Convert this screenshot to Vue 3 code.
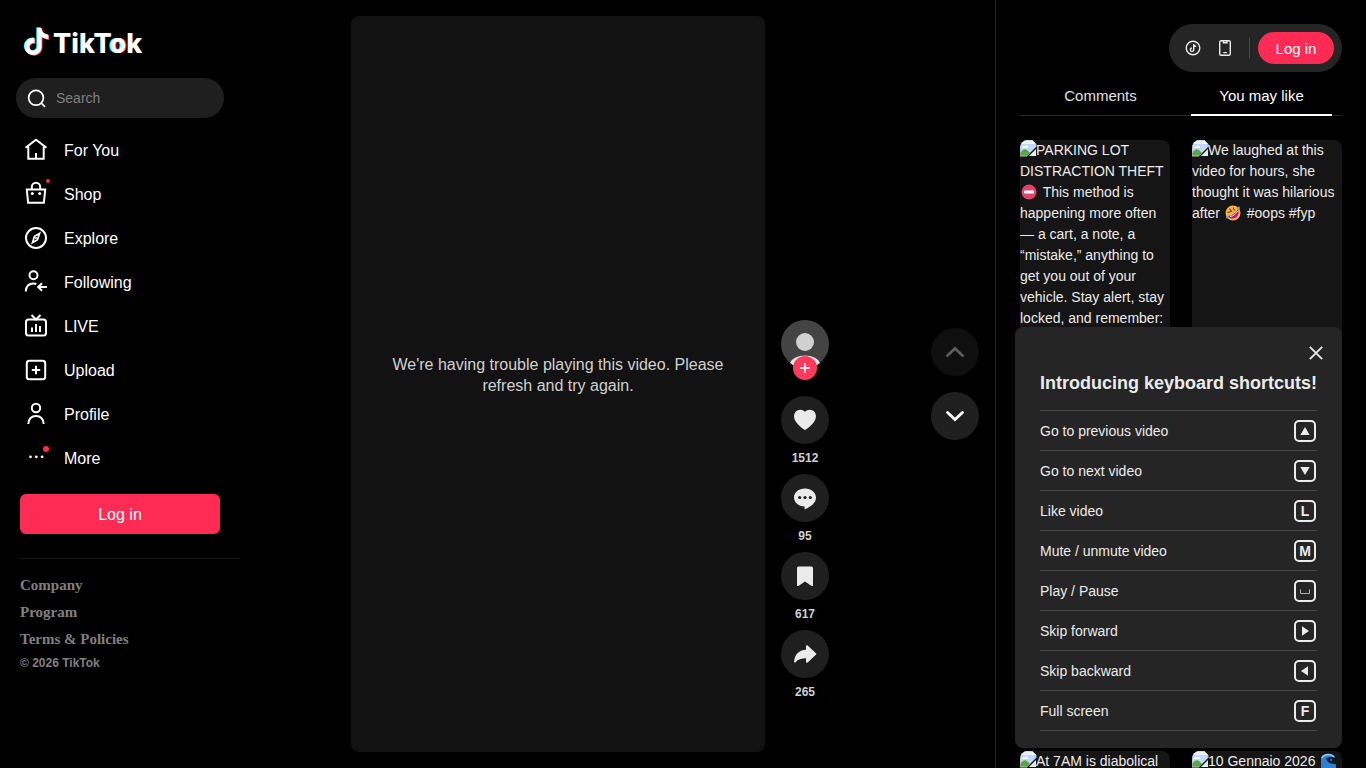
<template>
  <div class="app">
    <!-- Left navigation -->
    <aside class="sidebar">
      <a href="#" class="logo" aria-label="TikTok">
        <svg class="logo-note" viewBox="1 -0.8 22 25.6">
          <path :d="notePath" fill="#25f4ee" transform="translate(-0.7 -0.6)" />
          <path :d="notePath" fill="#fe2c55" transform="translate(0.7 0.6)" />
          <path :d="notePath" fill="#fff" />
        </svg>
        <span class="logo-text">TikT<span class="logo-o">o</span>k</span>
      </a>

      <label class="search">
        <svg viewBox="0 0 24 24">
          <circle cx="12" cy="11.8" r="7.4" />
          <path d="M17.200 17l3.800 3.800" />
        </svg>
        <input type="search" placeholder="Search" aria-label="Search" />
      </label>

      <nav class="menu">
        <a v-for="item in menu" :key="item.label" href="#" class="menu-item">
          <svg class="menu-icon" viewBox="0 0 24 24" v-html="item.icon"></svg>
          <span>{{ item.label }}</span>
        </a>
      </nav>

      <button class="login-wide">Log in</button>

      <footer class="links">
        <a v-for="link in links" :key="link" href="#">{{ link }}</a>
        <small>© 2026 TikTok</small>
      </footer>
    </aside>

    <!-- Video feed -->
    <main class="feed">
      <article class="post">
        <div class="player">
          <p>We're having trouble playing this video. Please refresh and try again.</p>
        </div>
        <div class="actions">
          <div class="author">
            <a href="#" class="avatar" aria-label="Author">
              <svg viewBox="0 0 48 48">
                <circle cx="24" cy="24" r="24" fill="#444" />
                <circle cx="24" cy="22" r="9" fill="#d0d0d0" />
                <path d="M9 43a15.500 10 0 0 1 30 0A24 24 0 0 1 9 43z" fill="#e4e4e4" />
              </svg>
            </a>
            <button class="follow" aria-label="Follow">
              <svg viewBox="0 0 24 24"><path d="M12 7v10M7 12h10" /></svg>
            </button>
          </div>
          <div v-for="action in actions" :key="action.name" class="action">
            <button class="round" :aria-label="action.name">
              <svg viewBox="0 0 24 24" v-html="action.icon"></svg>
            </button>
            <strong>{{ action.count }}</strong>
          </div>
        </div>
      </article>

      <div class="pager">
        <button class="round" aria-label="Previous video" disabled>
          <svg viewBox="0 0 24 24"><path d="M4.500 15.500l7.500-7 7.500 7" /></svg>
        </button>
        <button class="round" aria-label="Next video">
          <svg viewBox="0 0 24 24"><path d="M4.500 8.500l7.500 7 7.500-7" /></svg>
        </button>
      </div>
    </main>

    <!-- Right panel -->
    <aside class="panel">
      <div class="toolbar">
        <button class="tool" aria-label="Get coins">
          <svg viewBox="0 0 16 16">
            <circle cx="8" cy="8" r="6.8" />
            <path d="M8.700 4v5.700a1.700 1.700 0 1 1-1.700-1.700M8.700 4c.2 1.500 1.100 2.200 2.500 2.400" />
          </svg>
        </button>
        <button class="tool" aria-label="Get app">
          <svg viewBox="0 0 16 16">
            <rect x="2.700" y="0.700" width="10.6" height="14.6" rx="1.5" />
            <path d="M6.500 1v1.800h3.500v-1.800M6.300 12.600h3.500" />
          </svg>
        </button>
        <span class="divider"></span>
        <button class="login-pill">Log in</button>
      </div>

      <div class="tabs" role="tablist">
        <button
          v-for="tab in tabs"
          :key="tab"
          role="tab"
          class="tab"
          :class="{ active: tab === activeTab }"
          :aria-selected="tab === activeTab"
          @click="activeTab = tab"
        >{{ tab }}</button>
      </div>

      <div class="related">
        <a v-for="(video, i) in videos" :key="i" href="#" class="card">
          <svg class="missing" viewBox="0 0 16 16">
            <path d="M0 0h12l4 4v3l-9 9H0z" fill="#c3d9fb" />
            <path d="M0 0h12l4 4H0z" fill="#eaf1fc" />
            <path d="M2 8c0-2 2-2 2.500-1C5 5 8 5 8 8z" fill="#fff" />
            <path d="M0 13c2-3 5-5 7-3l3 3-3 3H0z" fill="#5aa54a" />
            <path d="M12 0v4h4z" fill="#fff" />
            <path d="M0 0h12l4 4v3M0 0v16h7" fill="none" stroke="#b8bdc4" />
            <path d="M16 9v7H9z" fill="#e8ecef" />
          </svg><template v-for="(part, j) in video" :key="j"><svg
            v-if="part.emoji"
            class="emoji"
            viewBox="0 0 16 16"
            v-html="emoji[part.emoji]"
          ></svg><template v-else>{{ part.text }}</template></template>
        </a>
      </div>
    </aside>

    <!-- Keyboard shortcuts popup -->
    <section v-if="showShortcuts" class="shortcuts">
      <button class="close" aria-label="Close" @click="showShortcuts = false">
        <svg viewBox="0 0 16 16"><path d="M2.500 2.500l11 11M13.500 2.500l-11 11" /></svg>
      </button>
      <h2>Introducing keyboard shortcuts!</h2>
      <ul>
        <li v-for="row in shortcuts" :key="row.label">
          <span>{{ row.label }}</span>
          <kbd>
            <template v-if="row.key">{{ row.key }}</template>
            <svg v-else viewBox="0 0 18 18"><path :d="row.shape" :class="{ outline: row.outline }" /></svg>
          </kbd>
        </li>
      </ul>
    </section>
  </div>
</template>

<script setup>
import { ref } from 'vue'

const notePath = 'M12.525.02c1.31-.02 2.61-.01 3.91-.02.08 1.53.63 3.09 1.75 4.17 1.12 1.11 2.7 1.62 4.24 1.79v4.03c-1.44-.05-2.89-.35-4.2-.97-.57-.26-1.1-.59-1.62-.93-.01 2.92.01 5.84-.02 8.75-.08 1.4-.54 2.79-1.35 3.94-1.31 1.92-3.58 3.17-5.91 3.21-1.43.08-2.86-.31-4.08-1.03-2.02-1.19-3.44-3.37-3.65-5.71-.02-.5-.03-1-.01-1.49.18-1.9 1.12-3.72 2.58-4.96 1.66-1.44 3.98-2.13 6.15-1.72.02 1.48-.04 2.96-.04 4.44-.99-.32-2.15-.23-3.02.37-.63.41-1.11 1.04-1.36 1.75-.21.51-.15 1.07-.14 1.61.24 1.64 1.82 3.02 3.5 2.87 1.12-.01 2.19-.66 2.77-1.61.19-.33.4-.67.41-1.06.1-1.79.06-3.57.07-5.36.01-4.03-.01-8.05.02-12.07z'

const menu = [
  { label: 'For You', icon: '<path d="M1.500 9.800L12 1.800l10.500 8M4.300 8.500V20.800h15.400V8.500M12 15v5.500"/>' },
  {
    label: 'Shop',
    icon: '<path d="M2.800 7.500h18.400l-1.300 13.200H4.100zM7.800 7.500V5a4.200 4.200 0 0 1 8.400 0v2.500"/>' +
      '<g fill="#fff" stroke="none"><circle cx="8.300" cy="11.500" r="1.500"/><circle cx="15.700" cy="11.500" r="1.500"/></g>' +
      '<circle cx="24" cy="-1" r="2" fill="#fe2c55" stroke="none"/>'
  },
  { label: 'Explore', icon: '<circle cx="12" cy="12" r="10"/><path d="M15.500 7.500L10.500 10.300 8.500 16.500 13.500 13.700z" stroke-width="1.800"/><circle cx="12" cy="12" r="1" fill="#fff" stroke="none"/>' },
  { label: 'Following', icon: '<circle cx="9.500" cy="5.300" r="4"/><path d="M1.800 21.500c.2-5 3-8 7.700-8 1 0 2 .1 2.800.5M23 17h-9M18 13.300L14.200 17l3.800 3.700"/>' },
  { label: 'LIVE', icon: '<rect x="2" y="5.500" width="20" height="16" rx="2.500"/><path d="M7.500 1l4.500 4.500L16.500 1M8 13.500V18M12 10v8M16 12v6"/>' },
  { label: 'Upload', icon: '<rect x="2.800" y="2.800" width="18.400" height="18.400" rx="2.500"/><path d="M12 7.800v8.400M7.800 12h8.400"/>' },
  { label: 'Profile', icon: '<circle cx="12" cy="6" r="4.200"/><path d="M4.300 22c.4-5 3.400-8 7.700-8s7.300 3 7.700 8"/>' },
  {
    label: 'More',
    icon: '<g fill="#fff" stroke="none"><circle cx="6.500" cy="10.800" r="1.400"/><circle cx="12.300" cy="10.800" r="1.400"/><circle cx="18.100" cy="10.800" r="1.400"/></g>' +
      '<circle cx="22" cy="3" r="3" fill="#fe2c55" stroke="none"/>'
  }
]

const links = ['Company', 'Program', 'Terms & Policies']

const actions = [
  { name: 'Like', count: '1512', icon: '<path d="M12 3.800c2-2.300 5.200-2.800 7.800-1.200 3.200 2 4 6.200 2.200 9.600-1.800 3.500-6.300 7.500-9 9.300-.6.400-1.400.4-2 0-2.700-1.800-7.200-5.800-9-9.300C.2 8.800 1 4.600 4.200 2.600 6.800 1 10 1.500 12 3.800z"/>' },
  {
    name: 'Comment',
    count: '95',
    icon: '<path d="M12 2.500c6.300 0 11 4 11 9 0 5.500-5.500 9.800-11.400 11.700V20.500C5.500 20.400 1 16.600 1 11.500s4.700-9 11-9z"/>' +
      '<g fill="#1f1f1f"><circle cx="6.700" cy="11.500" r="1.600"/><circle cx="12" cy="11.500" r="1.600"/><circle cx="17.300" cy="11.500" r="1.600"/></g>'
  },
  { name: 'Save', count: '617', icon: '<path d="M5.500 2.500h13a1.500 1.500 0 0 1 1.500 1.500v17.200c0 .9-.7 1.100-1.400.7L12 17.500 5.400 21.900c-.7.400-1.400.2-1.400-.7V4a1.500 1.500 0 0 1 1.500-1.500z"/>' },
  { name: 'Share', count: '265', icon: '<path d="M13 4.300c0-.9 1-1.300 1.700-.7l8.200 7.600c.5.400.5 1.100 0 1.600l-8.200 7.600c-.7.600-1.700.2-1.700-.7v-3.500c-5 0-8 1-10.400 4-.6.700-1.600.4-1.500-.5C1.600 12.800 5.500 8.300 13 7.800z"/>' }
]

const tabs = ['Comments', 'You may like']
const activeTab = ref('You may like')

// Emoji drawings used inside the captions
const emoji = {
  noEntry: '<circle cx="8" cy="8" r="7.500" fill="#e0446a"/><rect x="3" y="6.500" width="10" height="3" rx=".8" fill="#fff"/>',
  rofl: '<circle cx="8" cy="8" r="7.500" fill="#fbb040"/><path d="M3 11C7 11 11 8 12.500 4.500c3 4-1 9.500-5.500 9-2-.3-3.500-1.200-4-2.500z" fill="#b8157a"/>' +
    '<path d="M5 11.500C8.500 11 11 9 12.500 6" fill="none" stroke="#fff" stroke-width="1"/><path d="M2.500 7.500l4-1-2-3M8 2.500L9.500 5.500" fill="none" stroke="#704020" stroke-width="1.100"/>' +
    '<circle cx="2.500" cy="12" r="1.600" fill="#8a8ee0"/><circle cx="13.500" cy="3" r="1.500" fill="#8a8ee0"/>',
  wave: '<path d="M1 16V6c0-4 4-5.500 8-5 4 0 6 2 6 4-2-1.500-4-1-5 .500 1 0 2 .5 2.500 1.500-1 1 0 4 3.500 4.500V16z" fill="#2f7fd0"/>' +
    '<path d="M2 5c2-4 9-5 12-1" fill="none" stroke="#8fd0f8" stroke-width="1.400"/><path d="M6 6c2-2 5-2 8-1-3 0-4 1-4 2.500 2 .5 4 0 5-1v4c-4 1-8-1-9-5.500z" fill="#0c1c30"/>'
}

const videos = [
  [
    { text: 'PARKING LOT DISTRACTION THEFT ' },
    { emoji: 'noEntry' },
    { text: ' This method is happening more often — a cart, a note, a “mistake,” anything to get you out of your vehicle. Stay alert, stay locked, and remember:' }
  ],
  [
    { text: 'We laughed at this video for hours, she thought it was hilarious after ' },
    { emoji: 'rofl' },
    { text: ' #oops #fyp' }
  ],
  [{ text: 'At 7AM is diabolical' }],
  [{ text: '10 Gennaio 2026 ' }, { emoji: 'wave' }]
]

const showShortcuts = ref(true)
const shortcuts = [
  { label: 'Go to previous video', shape: 'M9 5l4.700 8H4.300z' },
  { label: 'Go to next video', shape: 'M9 13L4.300 5h9.400z' },
  { label: 'Like video', key: 'L' },
  { label: 'Mute / unmute video', key: 'M' },
  { label: 'Play / Pause', shape: 'M4.500 7.500v4h9v-4', outline: true },
  { label: 'Skip forward', shape: 'M13 9l-7 4.700V4.300z' },
  { label: 'Skip backward', shape: 'M5 9l7-4.700v9.400z' },
  { label: 'Full screen', key: 'F' }
]
</script>

<style>
body {
  background: #000;
}
</style>

<style scoped>
.app {
  display: flex;
  height: 100vh;
  overflow: hidden;
  background: #000;
  color: #fff;
  font-family: 'Liberation Sans', Arial, sans-serif;
  font-size: 16px;
}

.app * {
  box-sizing: border-box;
}

a {
  color: inherit;
  text-decoration: none;
}

button {
  border: 0;
  padding: 0;
  background: none;
  color: inherit;
  font: inherit;
  cursor: pointer;
}

svg {
  flex-shrink: 0;
  overflow: visible;
}

/* Sidebar */
.sidebar {
  flex: 0 0 240px;
  min-width: 0;
  padding-top: 24px;
}

.logo {
  display: flex;
  align-items: center;
  gap: 4px;
  height: 34px;
  margin: 0 24px 20px;
}

.logo-note {
  width: 25px;
  height: 29px;
}

.logo-text {
  padding-top: 6px;
  font-family: Inter, sans-serif;
  font-size: 27px;
  font-weight: 800;
  line-height: 34px;
}

.logo-o {
  text-shadow: -1px 0 #25f4ee, 1px 0 #fe2c55;
}

.search {
  display: flex;
  align-items: center;
  gap: 8px;
  height: 40px;
  margin: 0 16px 10px;
  padding: 0 8px;
  border-radius: 20px;
  background: #1f1f1f;
}

.search svg {
  width: 24px;
  height: 24px;
  fill: none;
  stroke: #fff;
  stroke-width: 1.7;
}

.search input {
  flex: 1;
  min-width: 0;
  padding: 0;
  border: 0;
  outline: 0;
  background: none;
  color: #fff;
  font-family: inherit;
  font-size: 14px;
}

.search input::placeholder {
  color: #808080;
}

.menu {
  display: flex;
  flex-direction: column;
}

.menu-item {
  display: flex;
  align-items: center;
  gap: 16px;
  height: 44px;
  padding-left: 24px;
}

.menu-item span {
  padding-top: 2px;
}

.menu-icon {
  width: 24px;
  height: 24px;
  fill: none;
  stroke: #fff;
  stroke-width: 2;
}

.login-wide {
  display: block;
  width: 200px;
  height: 40px;
  margin: 14px 20px 24px;
  padding-top: 2px;
  border-radius: 6px;
  background: #fe2c55;
}

.links {
  display: flex;
  flex-direction: column;
  margin-left: 20px;
  padding-top: 13px;
  border-top: 1px solid #161616;
  color: #808080;
  font-weight: bold;
}

.links a {
  font-family: 'Liberation Serif', 'Times New Roman', serif;
  font-size: 15px;
  line-height: 27px;
}

.links small {
  font-size: 12px;
  line-height: 20px;
}

/* Feed */
.feed {
  flex: 1;
  display: flex;
  align-items: center;
  min-width: 0;
  padding: 16px 16px 16px 9px;
}

.post {
  flex: 1;
  display: flex;
  justify-content: center;
  gap: 16px;
  height: 100%;
}

.player {
  display: flex;
  align-items: center;
  justify-content: center;
  height: 100%;
  aspect-ratio: 9 / 16;
  padding: 0 32px 18px;
  border-radius: 8px;
  background: #121212;
  color: #d0d0d0;
  line-height: 21px;
  text-align: center;
}

.player p {
  margin: 0;
}

.actions {
  display: flex;
  flex-direction: column;
  justify-content: flex-end;
  align-items: center;
  padding-bottom: 44px;
}

.author {
  position: relative;
  margin-bottom: 28px;
}

.avatar,
.avatar svg {
  display: block;
  width: 48px;
  height: 48px;
}

.follow {
  position: absolute;
  left: 12px;
  bottom: -12px;
  width: 24px;
  height: 24px;
  border-radius: 50%;
  background: #fe3b5c;
}

.follow svg {
  display: block;
  stroke: #fff;
  stroke-width: 1.5;
}

.action {
  display: flex;
  flex-direction: column;
  align-items: center;
}

.action strong {
  height: 30px;
  color: #d0d0d0;
  font-size: 12px;
  line-height: 28px;
}

.round {
  display: flex;
  align-items: center;
  justify-content: center;
  width: 48px;
  height: 48px;
  border-radius: 50%;
  background: #1f1f1f;
}

.action svg {
  width: 24px;
  height: 24px;
  fill: #ebebeb;
}

.pager {
  display: flex;
  flex-direction: column;
  gap: 16px;
}

.pager svg {
  width: 24px;
  height: 24px;
  fill: none;
  stroke: #fff;
  stroke-width: 2.8;
  stroke-linecap: round;
}

.pager .round:disabled {
  background: #0f0f0f;
}

.pager .round:disabled svg {
  stroke: #5c5c5c;
}

/* Right panel */
.panel {
  flex: 0 0 371px;
  padding: 24px 24px 0;
  border-left: 1px solid #262626;
}

.toolbar {
  display: flex;
  align-items: center;
  width: fit-content;
  height: 48px;
  margin-left: auto;
  padding: 0 8px;
  border-radius: 24px;
  background: #252525;
}

.tool {
  display: flex;
  align-items: center;
  justify-content: center;
  width: 32px;
  height: 32px;
}

.tool svg {
  width: 16px;
  height: 16px;
  fill: none;
  stroke: #ebebeb;
  stroke-width: 1.4;
}

.divider {
  width: 1px;
  height: 20px;
  margin: 0 8px;
  background: #4a4a4a;
}

.login-pill {
  width: 76px;
  height: 32px;
  border-radius: 16px;
  background: #fe2c55;
  font-size: 15px;
}

.tabs {
  display: flex;
  height: 44px;
  border-bottom: 1px solid #2a2a2a;
}

.tab {
  position: relative;
  flex: 1;
  height: 44px;
  padding-top: 2px;
  color: #e0e0e0;
  font-size: 15px;
}

.tab.active {
  color: #fff;
}

.tab.active::after {
  content: '';
  position: absolute;
  left: 10px;
  right: 10px;
  bottom: 0;
  height: 2px;
  background: #fff;
}

.related {
  display: grid;
  grid-template-columns: 1fr 1fr;
  gap: 11px 22px;
  margin-top: 24px;
}

.card {
  min-height: 600px;
  overflow: hidden;
  border-radius: 8px;
  background: #151515;
  color: #ebebeb;
  font-size: 14px;
  line-height: 21px;
}

.missing,
.emoji {
  width: 16px;
  height: 16px;
}

.missing {
  vertical-align: -1px;
}

.emoji {
  margin: 0 2px 0 1px;
  vertical-align: -3px;
}

/* Shortcuts popup */
.shortcuts {
  position: fixed;
  right: 24px;
  bottom: 20px;
  width: 327px;
  padding: 17px 25px;
  border-radius: 8px;
  background: #252525;
  color: #ebebeb;
}

.close {
  display: block;
  width: 18px;
  height: 18px;
  margin-left: auto;
  margin-right: -8px;
}

.close svg {
  display: block;
  width: 18px;
  height: 18px;
  stroke: #ebebeb;
  stroke-width: 1.6;
}

.shortcuts h2 {
  margin: 9px 0 15px;
  font-size: 18px;
  line-height: 24px;
  white-space: nowrap;
}

.shortcuts ul {
  margin: 0;
  padding: 0;
  border-top: 1px solid #454545;
  list-style: none;
  font-size: 14px;
}

.shortcuts li {
  display: flex;
  align-items: center;
  justify-content: space-between;
  height: 40px;
  border-bottom: 1px solid #454545;
}

kbd {
  display: flex;
  align-items: center;
  justify-content: center;
  width: 22px;
  height: 22px;
  margin-right: 1px;
  border: 2px solid #ebebeb;
  border-radius: 5px;
  font-family: inherit;
  font-size: 14px;
  font-weight: bold;
}

kbd svg {
  width: 18px;
  height: 18px;
  fill: #ebebeb;
}

kbd .outline {
  fill: none;
  stroke: #b0b0b0;
}
</style>
